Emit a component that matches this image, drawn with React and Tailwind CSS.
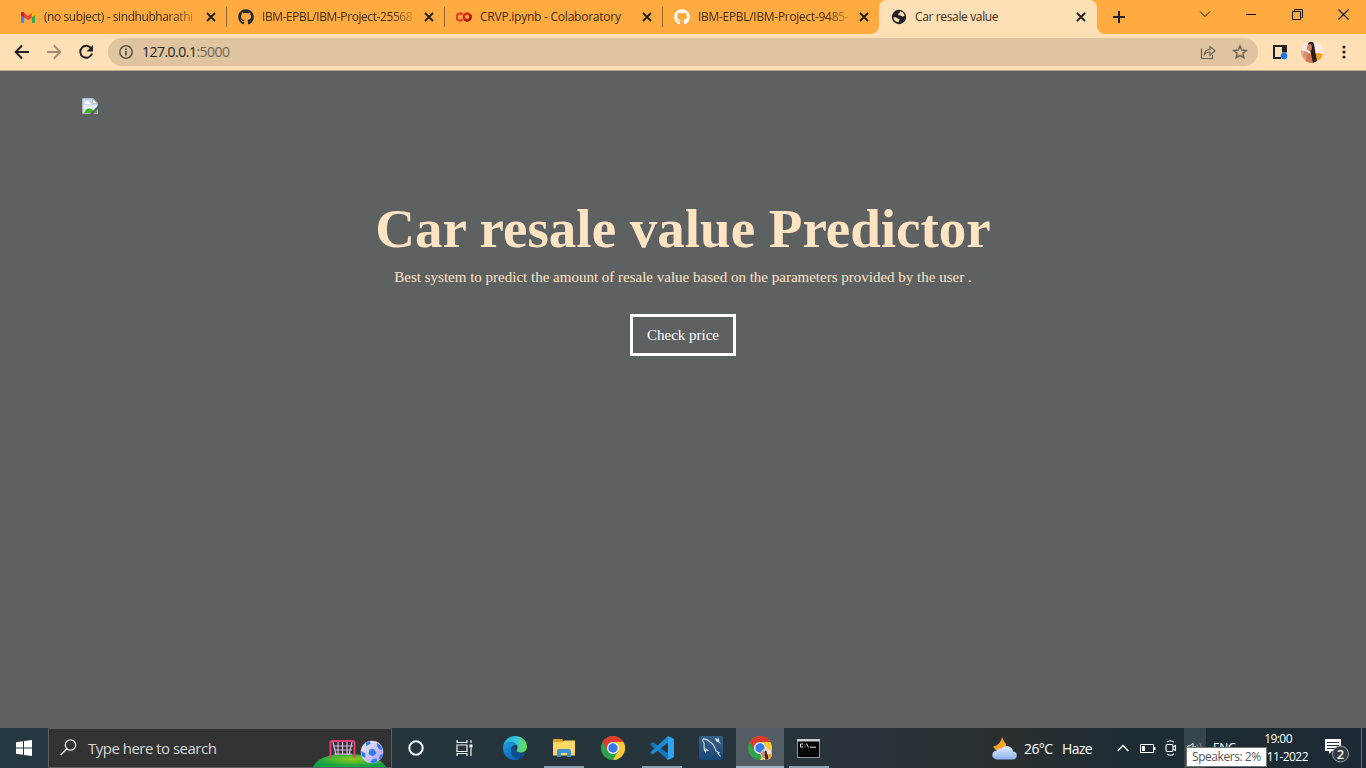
import React from "react";
import { FaGithub } from "react-icons/fa";

function Gmail() {
  return (
    <svg width="14" height="11" viewBox="0 0 14 11" className="block">
      <path d="M0 1.500V10a1 1 0 0 0 1 1h2.200V4z" fill="#4285f4" />
      <path d="M14 1.500V10a1 1 0 0 1-1 1h-2.200V4z" fill="#34a853" />
      <path d="M0 1.500C0 .2 1.500-.4 2.500.4L7 4l4.500-3.600C12.500-.4 14 .2 14 1.500V3L7 8.200 0 3z" fill="#ea4335" />
      <path d="M10.800 1v4.400L14 3V1.500C14 .2 12.500-.4 11.500.4z" fill="#fbbc04" />
      <path d="M0 1.500V3l3.200 2.400V1L2.500.4C1.500-.4 0 .2 0 1.500z" fill="#c5221f" />
    </svg>
  );
}

function Colab() {
  return (
    <svg width="16" height="10" viewBox="0 0 16 10" className="block" fill="none" strokeWidth="2.500">
      <path d="M6.700 7.200A3.500 3.500 0 1 1 6.700 2.800" stroke="#e8412c" />
      <circle cx="11.200" cy="5" r="3.400" stroke="#d92b1c" />
      <path d="M8.800 7.400A3.400 3.400 0 0 0 13.600 2.600" stroke="#b3160e" />
    </svg>
  );
}

function Globe() {
  return (
    <svg width="16" height="16" viewBox="0 0 16 16" className="block">
      <circle cx="8" cy="8" r="7.200" fill="#202124" />
      <path d="M2.300 8.300c1.500-.3 3.200.1 4.200 1 .8.700 1.700.4 2.100 1.300.3.900-.8 1.400-1 2.700-2.700-.2-5.200-2.300-5.300-5zM8.700 2.300c2.200.2 4.300 1.900 4.900 4.200-.8.900-1.800 1.300-3 .8-.8-.4-1-1.200-2-1.100-1 .2-1.700-.300-1.300-1.200.3-.6 1.100-.5 1.500-1.200z" fill="#ffdfb6" />
    </svg>
  );
}

function TabClose() {
  return (
    <svg width="10" height="10" viewBox="0 0 10 10" className="block shrink-0" stroke="#202124" strokeWidth="1.800">
      <path d="M1 1l8 8M9 1l-8 8" />
    </svg>
  );
}

function Tab({ icon, title, width, pad = "pl-[11px]", gap = "ml-[9px]", tracking, fade, active }) {
  return (
    <div className={`relative flex h-[34px] items-center ${pad} ${width} ${active ? "rounded-t-lg bg-[#ffdfb6]" : ""}`}>
      {active && (
        <svg width="8" height="8" viewBox="0 0 8 8" className="absolute bottom-0 -left-2 block">
          <path d="M8 0v8H0a8 8 0 0 0 8-8z" fill="#ffdfb6" />
        </svg>
      )}
      {active && (
        <svg width="8" height="8" viewBox="0 0 8 8" className="absolute -right-2 bottom-0 block">
          <path d="M0 0v8h8a8 8 0 0 1-8-8z" fill="#ffdfb6" />
        </svg>
      )}
      <div className="flex w-4 shrink-0 justify-center">{icon}</div>
      <div className={`ml-2 w-[153px] shrink-0 overflow-hidden text-[12px] leading-[18px] whitespace-nowrap text-[#3c2c18] ${tracking} ${fade ? "[mask-image:linear-gradient(to_right,black_84%,rgba(0,0,0,0.15))]" : ""}`}>
        {title}
      </div>
      <div className={gap}><TabClose /></div>
    </div>
  );
}

const Divider = () => <div className="h-5 w-px bg-[#8f632b]" />;

function TabStrip() {
  return (
    <div className="flex h-[34px] items-center bg-[#ffab40] pl-2">
      <Tab width="w-[218px]" pad="pl-3" icon={<Gmail />} title="(no subject) - sindhubharathi" tracking="tracking-[-0.42px]" fade />
      <Divider />
      <Tab width="w-[217px]" icon={<FaGithub size={16} color="#24292f" />} title="IBM-EPBL/IBM-Project-25568" tracking="tracking-[-0.42px]" fade />
      <Divider />
      <Tab width="w-[217px]" icon={<Colab />} title="CRVP.ipynb - Colaboratory" tracking="tracking-[-0.24px]" />
      <Divider />
      <Tab width="w-[216px]" gap="ml-[8px]" icon={<FaGithub size={16} color="#ffffff" />} title="IBM-EPBL/IBM-Project-9485-" tracking="tracking-[-0.3px]" fade />
      <Tab width="w-[218px]" pad="pl-3" gap="ml-[8px]" icon={<Globe />} title="Car resale value" tracking="tracking-[-0.36px]" active />
      <svg width="12" height="12" viewBox="0 0 12 12" className="ml-4 block" stroke="#202124" strokeWidth="2">
        <path d="M6 0v12M0 6h12" />
      </svg>
      <div className="mb-[6px] ml-auto flex items-center pr-[17px]">
        <svg width="12" height="8" viewBox="0 0 12 8" fill="none" stroke="#1c160d" strokeWidth="1"><path d="M1 1.500l5 5 5-5" /></svg>
        <svg width="10" height="2" viewBox="0 0 10 2" className="ml-[35px]"><path d="M0 1h10v1H0z" fill="#111" /></svg>
        <svg width="11" height="11" viewBox="0 0 11 11" className="ml-9" fill="none" stroke="#111" strokeWidth="1"><path d="M.5 2.500h8v8h-8zM2.500 2.500v-2h8v8h-2" /></svg>
        <svg width="11" height="11" viewBox="0 0 11 11" className="ml-[35px]" stroke="#111" strokeWidth="1.100"><path d="M.5.5l10 10M10.500.5l-10 10" /></svg>
      </div>
    </div>
  );
}

function Avatar() {
  return (
    <svg width="22" height="22" viewBox="0 0 22 22" className="block">
      <defs><clipPath id="face"><circle cx="11" cy="11" r="11" /></clipPath></defs>
      <g clipPath="url(#face)">
        <path d="M0 0h22v22H0z" fill="#f7e8e0" />
        <path d="M0 9l5 2 1 11H0z" fill="#eda391" />
        <path d="M13 13l4-1 5 1v4l-8 4z" fill="#eda321" />
        <path d="M6 12l6 1 1 9H4z" fill="#cf7a4e" />
        <path d="M7 3c1-3 5-3 6 0l1.500 9 1.500 8-4 2-2-9-1-4z" fill="#2f1c1c" />
        <ellipse cx="8.500" cy="6.500" rx="2.400" ry="3.600" fill="#c9825e" />
        <path d="M3 10l4 1-1 6-4-2z" fill="#d98d70" />
      </g>
    </svg>
  );
}

function Toolbar() {
  return (
    <div className="flex h-9 items-center bg-[#ffdfb6] pl-[14px]">
      <svg width="16" height="16" viewBox="0 0 16 16" fill="none" stroke="#202124" strokeWidth="2"><path d="M15 8H2M8 1.500L1.700 8 8 14.500" /></svg>
      <svg width="16" height="16" viewBox="0 0 16 16" className="ml-4" fill="none" stroke="#a08d74" strokeWidth="1.800"><path d="M1 8h13M8 1.500L14.300 8 8 14.500" /></svg>
      <svg width="16" height="16" viewBox="0 0 16 16" className="ml-4" fill="none" stroke="#202124" strokeWidth="2"><path d="M13.300 4.500A6 6 0 1 0 14 9.500" /><path d="M15 1v6.500H8.500z" fill="#202124" stroke="none" /></svg>
      <div className="ml-[14px] flex h-7 w-[1150px] items-center rounded-full bg-[#dfc49f] pr-[10px] pl-[11px]">
        <svg width="14" height="14" viewBox="0 0 14 14" fill="none" stroke="#5d564c" strokeWidth="1.500"><circle cx="7" cy="7" r="6.200" /><path d="M7 6v4.500M7 3.300v1.600" strokeWidth="1.700" /></svg>
        <div className="ml-[9px] text-[14px] leading-5 tracking-[-0.52px] text-[#25231f]">127.0.0.1<span className="text-[#6f675b]">:5000</span></div>
        <svg width="16" height="16" viewBox="0 0 16 16" className="ml-auto" fill="none" stroke="#6b6358" strokeWidth="1.200"><path d="M1.500 4.500v10h11v-3.500M4.500 10.500c.3-3.500 2.500-5 5.500-5.100V2.500l5 4.500-5 4.300V8c-2.500 0-4.200.700-5.500 2.500z" /></svg>
        <svg width="16" height="16" viewBox="0 0 16 16" className="ml-4" fill="none" stroke="#6b6358" strokeWidth="1.500"><path d="M8 2l1.700 4.100 4.500.4-3.400 2.900 1 4.400L8 11.500l-3.800 2.300 1-4.400-3.400-2.900 4.500-.4z" /></svg>
      </div>
      <svg width="16" height="16" viewBox="0 0 16 16" className="ml-[14px]"><path d="M1 1h14v7.500h-5V3H3v10h6v2H1z" fill="#202124" /><circle cx="12" cy="12" r="3.300" fill="#1a73e8" /></svg>
      <div className="ml-[13px]"><Avatar /></div>
      <svg width="4" height="14" viewBox="0 0 4 14" className="ml-[19px]" fill="#202124"><circle cx="2" cy="2" r="1.600" /><circle cx="2" cy="7" r="1.600" /><circle cx="2" cy="12" r="1.600" /></svg>
    </div>
  );
}

function BrokenImage() {
  return (
    <svg width="16" height="16" viewBox="0 0 16 16" className="block">
      <path d="M.5.5h10.500l4.500 4.500v10.500H.5z" fill="#cbdcf6" stroke="#b4b6b8" />
      <path d="M1 7h14v4H1z" fill="#e2ebfa" />
      <path d="M10.500.5v5h5z" fill="#fff" stroke="#a9abad" strokeWidth=".8" />
      <path d="M3 6c-.9-2 1-2.300 1.500-2.200 1-1.500 3 0 2.700 1 1.300 0 1 1.200.3 1.200z" fill="#fff" />
      <path d="M2 15c1.500-3.500 4.500-5.500 7.500-4l4.500 4z" fill="#46ab28" />
      <path d="M8 16l8-8.500V11l-4.500 5z" fill="#5d6161" />
      <path d="M12.500 15l2.500-2.500V15z" fill="#46ab28" />
    </svg>
  );
}

function Page() {
  return (
    <main className="flex h-[657px] flex-col items-center bg-[#5d6161] [font-family:'Liberation_Serif',serif]">
      <div className="w-full pt-[27px] pl-[82px]"><BrokenImage /></div>
      <h1 className="mt-[84px] text-[55px] leading-[62px] font-bold whitespace-nowrap text-[#ffe4c4]">Car resale value Predictor</h1>
      <p className="mt-[9px] text-[15px] leading-[17px] whitespace-nowrap text-[#ffe4c4]">Best system to predict the amount of resale value based on the parameters provided by the user .</p>
      <button className="mt-[28px] h-[42px] w-[106px] border-[3px] border-white text-[15px] leading-[17px] text-white">Check price</button>
    </main>
  );
}

function Soccer() {
  return (
    <svg width="80" height="38" viewBox="0 0 80 38" className="block">
      <defs>
        <radialGradient id="hill" cx=".55" cy=".4" r=".55"><stop offset="0" stopColor="#8fce13" /><stop offset="1" stopColor="#0fa04a" /></radialGradient>
        <linearGradient id="ball" x1="0" y1="0" x2="1" y2="1"><stop offset="0" stopColor="#f0f0fa" /><stop offset="1" stopColor="#a99af0" /></linearGradient>
      </defs>
      <path d="M1 38c4-9 16-13 34-13s34 4 39 13z" fill="url(#hill)" />
      <path d="M21 13l3 13M40 13l-3 13M21 17h20M22 21h18M22 25h18M26 13v13M30.500 13v13M35 13v13" stroke="#d3b7dd" strokeWidth="1.200" />
      <path d="M18.500 29V14q0-2 2-2h20q2 0 2 2v15" fill="none" stroke="#ee3b75" strokeWidth="2" />
      <circle cx="60" cy="23" r="11.300" fill="url(#ball)" />
      <path d="M57.500 20.500l4.500-.5 2.500 4-3.500 3.500-4.500-2.500zM54 13.500l4-1.300.5 2.500-4.500 2.500zM65 14l4 3 1.500 4-3-.5-2.500-3zM49 22l4.500 2.500-.5 4.500-3-2zM60 30.500l4.500-1 .5 3-4 1.700-2.500-1zM68 26l3-1-2 5-2 0z" fill="#2f7df0" />
    </svg>
  );
}

function ChromeLogo({ badge }) {
  return (
    <svg width="24" height="24" viewBox="0 0 24 24" className="block">
      <circle cx="12" cy="12" r="12" fill="#2ca24c" />
      <path d="M1.600 6A12 12 0 0 1 22.400 6H12a6 6 0 0 0-5.200 9z" fill="#e33b2e" />
      <path d="M22.400 6A12 12 0 0 1 12 24l5.200-9A6 6 0 0 0 12 6z" fill="#fcc934" />
      <circle cx="12" cy="12" r="6" fill="#fff" />
      <circle cx="12" cy="12" r="4.700" fill="#3b78e7" />
      {badge && (
        <g>
          <circle cx="18.300" cy="18.300" r="5.700" fill="#f2dfd4" />
          <path d="M13 17l3-3 2 9-3-1q-2-2-2-5z" fill="#d08a66" />
          <path d="M17 14.500c2 0 2 3 3 5l.5 3.500-3 1c0-3-1.500-6-.5-9.500z" fill="#3a211d" />
          <path d="M20 18.500l4-1-1 4-2.500 1.500z" fill="#eaa32a" />
        </g>
      )}
    </svg>
  );
}

function Edge() {
  return (
    <svg width="24" height="24" viewBox="0 0 24 24" className="block">
      <defs>
        <linearGradient id="edgeTop" x1="0" y1=".2" x2="1" y2=".4"><stop offset="0" stopColor="#23a8e8" /><stop offset=".5" stopColor="#35c4dc" /><stop offset="1" stopColor="#66dc58" /></linearGradient>
        <linearGradient id="edgeLow" x1="0" y1="0" x2=".6" y2="1"><stop offset="0" stopColor="#1b9de2" /><stop offset="1" stopColor="#0d64b8" /></linearGradient>
      </defs>
      <path d="M0 11C1 4 6 0 12 0c7 0 12 5 12 10.500 0 4-3 6-6.300 6-2.500 0-4.200-1-4.200-2 0-.7 1-1.200 1-3C14.500 9 12 6.300 8 6.300 4.500 6.300 1.500 8 0 11z" fill="url(#edgeTop)" />
      <path d="M0 12c.3-3.500 4-5.800 8-5.700 3 0 5.300 1.500 6.200 3.500C10 8 7.500 12 8.200 15.500 9 20 13 23 17 22.700 15.500 23.600 13.800 24 12 24 5 24 0 18.700 0 12z" fill="url(#edgeLow)" />
      <path d="M8 14.500c.5-2 1.800-3.700 4-4.200-.8 5 4 8.400 10 6.200.7-.3 1.100 0 .7.700-1.500 2.600-4.400 5.500-8 5.500-4 0-7-4-6.700-8.200z" fill="#10508f" />
    </svg>
  );
}

function Explorer() {
  return (
    <svg width="22" height="18" viewBox="0 0 22 18" className="block">
      <path d="M0 1q0-1 1-1h8l1.500 2H22v4H0z" fill="#e3a21c" />
      <path d="M0 3h10l1.500-1.500H22V16.500H0z" fill="#ffd765" />
      <path d="M4 18v-6q0-2 2-2h10q2 0 2 2v6h-4v-4H8v4z" fill="#3d93d6" />
    </svg>
  );
}

function VSCode() {
  return (
    <svg width="24" height="24" viewBox="0 0 24 24" className="block">
      <path d="M.5 7.500l2.500-1.500 15 11.500V24L.5 9z" fill="#1478b8" />
      <path d="M.5 16L18 0v6.500L3 18.200.5 17z" fill="#1b8bd0" />
      <path d="M18 0l6 3v18l-6 3-1-1 1-.8z" fill="#2aa5ee" />
    </svg>
  );
}

function MySQL() {
  return (
    <svg width="24" height="24" viewBox="0 0 24 24" className="block">
      <defs><linearGradient id="wb" x1="0" y1="0" x2="0" y2="1"><stop offset="0" stopColor="#3b6186" /><stop offset="1" stopColor="#164878" /></linearGradient></defs>
      <rect width="24" height="24" rx="2" fill="url(#wb)" />
      <path d="M4 3c3-.5 5 1 7 3 4 2 5 6 6 9l3 2-1 .5 2.500 3M4 3c-1 2 .5 3 1 4 .5 3-1 6 1.500 9l.5-3 2.500 2" fill="none" stroke="#d6e4ef" strokeWidth="1.100" />
      <path d="M16 2l3 1 1-1 0 3 2 3-3-2-2-1z" fill="#dce8f0" />
    </svg>
  );
}

function Terminal() {
  return (
    <svg width="23" height="19" viewBox="0 0 23 19" className="block">
      <rect x=".5" y=".5" width="22" height="18" fill="#050505" stroke="#8d9294" />
      <path d="M0 0h23v2.500H0z" fill="#c9cdd0" />
      <path d="M6 5H3.500v3H6M8 5.500v.8M8 7.500v.8M9.500 4.500l2 4M13 8.200h6" fill="none" stroke="#e8e8e8" strokeWidth="1" />
    </svg>
  );
}

function TaskIcon({ children, state, width = "w-[49px]" }) {
  return (
    <div className={`flex h-10 flex-col items-center ${width} ${state === "active" ? "bg-[#535e64]" : ""}`}>
      <div className="flex h-[38px] items-center pt-[2px]">{children}</div>
      <div className={`h-[2px] ${state === "active" ? "w-full bg-[#9db4c4]" : "w-10"} ${state === "open" ? "bg-[#8ba3b3]" : ""}`} />
    </div>
  );
}

function Taskbar() {
  return (
    <footer className="flex h-10 items-center bg-[linear-gradient(to_right,#233740_0%,#26343b_45%,#28343a_62%,#2a2f31_74%,#1e2d34_82%,#1d2a35_100%)] text-white">
      <div className="flex w-12 justify-center">
        <svg width="16" height="16" viewBox="0 0 16 16" fill="#fff"><path d="M0 2.200L7 1.200v6.300H0zM8 1l8-1v7.500H8zM0 8.500h7v6.300l-7-1zM8 8.500h8V16l-8-1z" /></svg>
      </div>
      <div className="flex h-10 w-[344px] items-center border border-[#5d6061] bg-[#333] pl-[11px]">
        <svg width="17" height="17" viewBox="0 0 17 17" className="mb-px" fill="none" stroke="#e8e8e8" strokeWidth="1.300"><circle cx="10.500" cy="6" r="5.200" /><path d="M6.800 9.700L.7 16" /></svg>
        <div className="ml-[11px] text-[15px] leading-5 tracking-[-0.51px] whitespace-nowrap text-[#d8d8d8]">Type here to search</div>
        <div className="mr-[-1px] ml-auto"><Soccer /></div>
      </div>
      <TaskIcon width="w-12"><svg width="16" height="16" viewBox="0 0 16 16" fill="none" stroke="#f5f5f5" strokeWidth="2"><circle cx="8" cy="8" r="6.700" /></svg></TaskIcon>
      <TaskIcon width="w-12"><svg width="17" height="16" viewBox="0 0 17 16" fill="none" stroke="#f2f2f2" strokeWidth="1.200"><path d="M1 0v2.500h10V0M1 5h10v6.500H1zM1 16v-2.500h10V16M15 0v3M15 8v8" /><path d="M13.500 4.500h3v3h-3z" fill="#fff" stroke="none" /></svg></TaskIcon>
      <TaskIcon width="w-[52px]"><div className="ml-[2px]"><Edge /></div></TaskIcon>
      <TaskIcon state="open" width="w-12"><Explorer /></TaskIcon>
      <TaskIcon width="w-[50px]"><ChromeLogo /></TaskIcon>
      <TaskIcon state="open" width="w-12"><VSCode /></TaskIcon>
      <TaskIcon width="w-[50px]"><MySQL /></TaskIcon>
      <TaskIcon state="active" width="w-12"><ChromeLogo badge /></TaskIcon>
      <TaskIcon state="open" width="w-[50px]"><div className="mr-px"><Terminal /></div></TaskIcon>
      <div className="ml-auto flex h-10 items-center">
        <svg width="25" height="23" viewBox="0 0 25 23">
          <defs><linearGradient id="cloud" x1="0" y1="0" x2="0" y2="1"><stop offset="0" stopColor="#e4edfb" /><stop offset="1" stopColor="#8db1ec" /></linearGradient></defs>
          <path d="M10 0c-1 6-5 9-9 9.500 2 4 7 6 12 4L14 7C12 5 11 2 10 0z" fill="#f6a623" />
          <path d="M5 22.500a4.500 4.500 0 0 1-.5-9 5 5 0 0 1 5-2 6.500 6.500 0 0 1 11.500 3 4 4 0 0 1-.5 8z" fill="url(#cloud)" />
        </svg>
        <div className="ml-[7px] w-[31px] text-[14px] tracking-[-0.6px] whitespace-nowrap">26°C</div>
        <div className="ml-[7px] w-[31px] text-[14px] tracking-[-0.6px] whitespace-nowrap">Haze</div>
        <svg width="12" height="8" viewBox="0 0 12 8" className="ml-[24px]" fill="none" stroke="#fff" strokeWidth="1.300"><path d="M.7 7L6 1.500 11.300 7" /></svg>
        <svg width="16" height="9" viewBox="0 0 16 9" className="ml-[11px]"><path d="M.5.5h13v8H.5z" fill="none" stroke="#fff" /><path d="M2 2h3v5H2zM14 3h1.500v3H14z" fill="#fff" /></svg>
        <svg width="12" height="16" viewBox="0 0 12 16" className="ml-[9px]" fill="none" stroke="#fff" strokeWidth="1.100"><path d="M2 2.200q3.500-3 7 0M2 13.800q3.500 3 7 0" /><rect x="1" y="4.500" width="7" height="7" rx="1.500" /><path d="M8 7l2.500-1.500v5L8 9" /></svg>
        <div className="relative ml-[7px] flex h-10 w-[22px] items-center justify-center bg-[#36444b]">
          <svg width="16" height="12" viewBox="0 0 16 12" fill="none" stroke="#fff" strokeWidth="1"><path d="M.5 4h2.500L6 1v10L3 8H.5z" /><path d="M8 4q1.500 2 0 4" /><path d="M10 2.500q3 3.500 0 7M12.500 1q4 5 0 10" stroke="#87919a" /></svg>
          <div className="absolute top-[19px] left-[2px] z-10 h-[20px] w-[81px] border border-[#767676] bg-white pl-[5px] text-[12px] leading-[18px] tracking-[-0.45px] whitespace-nowrap text-[#575757]">Speakers: 2%</div>
        </div>
        <div className="w-[38px] pl-[7px] text-[12px] tracking-[-0.3px]">ENG</div>
        <div className="flex w-[64px] flex-col items-end text-[12px] leading-[18px] tracking-[-0.55px] whitespace-nowrap">
          <div className="pr-[16px]">19:00</div>
          <div>11-2022</div>
        </div>
        <svg width="27" height="27" viewBox="0 0 27 27" className="mt-[6px] ml-[16px]">
          <path d="M1 1h16v12H8l-3 3v-3H1z" fill="#fff" />
          <path d="M3 4.500h12M3 7.500h12M3 10.500h8" stroke="#243039" />
          <circle cx="16.500" cy="16" r="8" fill="#343b41" stroke="#9a9fa3" strokeWidth="1" />
          <text x="16.500" y="20.500" textAnchor="middle" fontSize="13" fontWeight="600" fill="#fff" fontFamily="Open Sans, sans-serif">2</text>
        </svg>
        <div className="ml-[10px] h-10 w-px bg-[#65717a]" />
        <div className="w-1" />
      </div>
    </footer>
  );
}

export default function App() {
  return (
    <div className="h-[768px] w-[1366px] overflow-hidden [font-family:'Open_Sans',sans-serif]">
      <TabStrip />
      <Toolbar />
      <div className="h-px bg-[#b9a88d]" />
      <Page />
      <Taskbar />
    </div>
  );
}
